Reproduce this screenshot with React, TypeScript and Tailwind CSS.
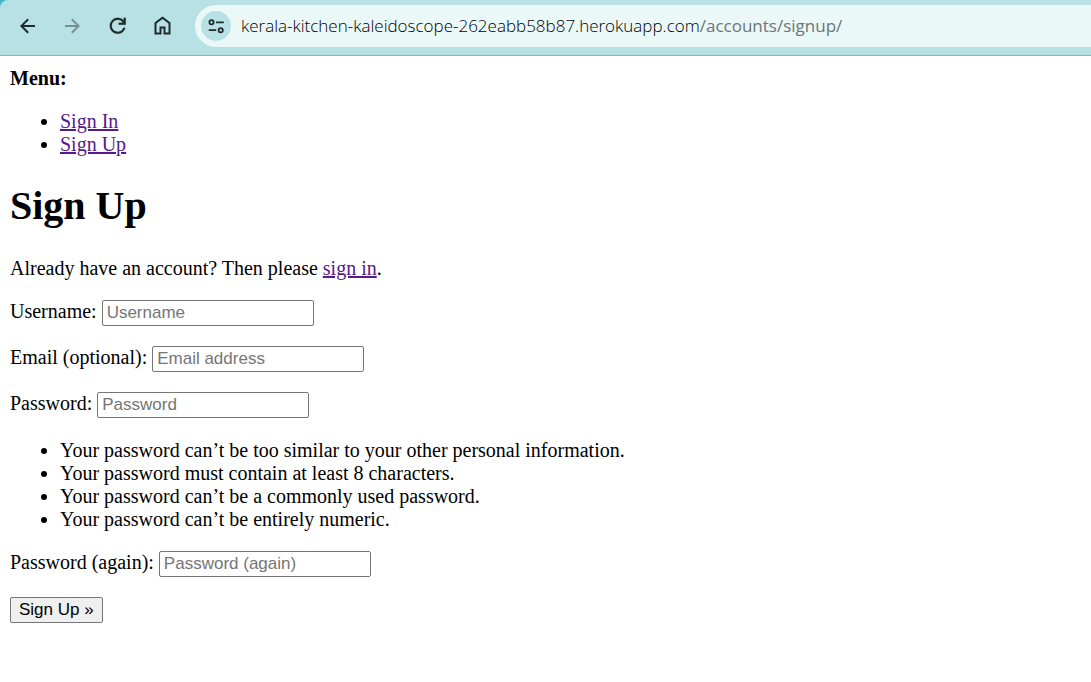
import React from "react";

type FieldProps = {
  id: string;
  label: string;
  placeholder: string;
  type: string;
};

function Field({ id, label, placeholder, type }: FieldProps) {
  return (
    <div className="mt-5 flex h-[26px] items-start gap-[5px]">
      <label htmlFor={id}>{label}</label>
      <input
        id={id}
        name={id}
        type={type}
        placeholder={placeholder}
        className="h-full w-[212px] rounded-[2px] border border-[#767676] bg-white px-1 font-['Liberation_Sans',Arial,sans-serif] text-[17px] leading-5 placeholder:text-[#757575]"
      />
    </div>
  );
}

const linkClass = "text-[#551a8b] underline";

const passwordRules = [
  "Your password can’t be too similar to your other personal information.",
  "Your password must contain at least 8 characters.",
  "Your password can’t be a commonly used password.",
  "Your password can’t be entirely numeric.",
];

function BrowserBar() {
  return (
    <div className="bg-[#3fb5c2]">
      <header className="flex h-14 items-center rounded-tl-lg border-b border-[#8db5b9] bg-[#b8e1e5] pb-[3px] pl-4 text-[#1f2a2c]">
        <nav aria-label="Browser" className="flex shrink-0 gap-[21px]">
          <button type="button" aria-label="Back" className="size-6">
            <svg viewBox="0 0 24 24" className="size-6" fill="currentColor">
              <path d="m11.5 19.5-7.5-7.5 7.5-7.5 1.4 1.4-5.1 5.1H19v2H7.8l5.1 5.1Z" />
            </svg>
          </button>
          <button type="button" aria-label="Forward" className="size-6 text-[#75908f]">
            <svg viewBox="0 0 24 24" className="size-6" fill="currentColor">
              <path d="m11.5 19.5 7.5-7.5-7.5-7.5-1.4 1.4 5.1 5.1H4v2h11.2l-5.1 5.1Z" />
            </svg>
          </button>
          <button type="button" aria-label="Reload" className="size-6">
            <svg viewBox="0 0 24 24" className="size-6" fill="currentColor" stroke="currentColor" strokeWidth="0.2">
              <path d="M11.7 19.8q-3.35 0-5.675-2.325T3.7 11.8q0-3.35 2.325-5.675T11.7 3.8q1.725 0 3.3.713T17.7 6.55V3.8h2v7h-7V8.8h4.2q-.8-1.4-2.187-2.2T11.7 5.8Q9.2 5.8 7.45 7.55T5.7 11.8q0 2.5 1.75 4.25T11.7 17.8q1.925 0 3.475-1.1T17.35 13.8h2.1q-.7 2.65-2.85 4.325T11.7 19.8Z" />
            </svg>
          </button>
          <button type="button" aria-label="Home" className="size-6">
            <svg viewBox="0 0 24 24" className="size-6" fill="currentColor">
              <path d="M5.5 18.5h3v-6h6v6h3V9.6l-6-4.5-6 4.5v8.9Zm-2 2V8.6l8-6 8 6v11.9h-7v-6h-2v6h-7Z" />
            </svg>
          </button>
        </nav>
        <div className="ml-5 flex h-[42px] min-w-0 flex-1 items-center rounded-l-full bg-[#ebf8f8] pl-[6px]">
          <button
            type="button"
            aria-label="View site information"
            className="flex size-[30px] shrink-0 items-center justify-center rounded-full bg-[#b8e1e5]"
          >
            <svg viewBox="0 0 20 20" className="size-5" fill="none" stroke="currentColor" strokeWidth="1.8">
              <circle cx="5.5" cy="6.3" r="2.1" />
              <path d="M10 6.3h7.8M2.8 14.2h7.4" />
              <circle cx="14.7" cy="14.2" r="2.1" />
            </svg>
          </button>
          <span className="ml-[10px] truncate font-['Open_Sans','Noto_Sans',sans-serif] text-[17px] leading-6 font-light text-black">
            kerala-kitchen-kaleidoscope-262eabb58b87.herokuapp.com
            <span className="font-normal text-[#6b7576]">/accounts/signup/</span>
          </span>
        </div>
      </header>
    </div>
  );
}

export default function App() {
  return (
    <div className="min-h-screen bg-white font-['Liberation_Serif','Times_New_Roman',serif] text-[20px] leading-[23px] text-black">
      <BrowserBar />
      <main className="px-[10px] py-[11px]">
        <strong className="block">Menu:</strong>
        <ul className="mt-5 list-disc pl-[50px]">
          <li>
            <a href="#signin" className={linkClass}>Sign In</a>
          </li>
          <li>
            <a href="#signup" className={linkClass}>Sign Up</a>
          </li>
        </ul>
        <h1 className="mt-[27px] text-[40px] leading-[46px] font-bold">Sign Up</h1>
        <p className="mt-7">
          Already have an account? Then please <a href="#signin" className={linkClass}>sign in</a>.
        </p>
        <form onSubmit={(event) => event.preventDefault()}>
          <Field id="username" label="Username:" placeholder="Username" type="text" />
          <Field id="email" label="Email (optional):" placeholder="Email address" type="email" />
          <Field id="password1" label="Password:" placeholder="Password" type="password" />
          <ul className="mt-[21px] list-disc pl-[50px]">
            {passwordRules.map((rule) => (
              <li key={rule}>{rule}</li>
            ))}
          </ul>
          <Field id="password2" label="Password (again):" placeholder="Password (again)" type="password" />
          <button
            type="submit"
            className="mt-5 flex h-[26px] items-center rounded-[2px] border border-[#767676] bg-[#efefef] px-2 font-['Liberation_Sans',Arial,sans-serif] text-[17px] leading-5"
          >
            Sign Up »
          </button>
        </form>
      </main>
    </div>
  );
}
